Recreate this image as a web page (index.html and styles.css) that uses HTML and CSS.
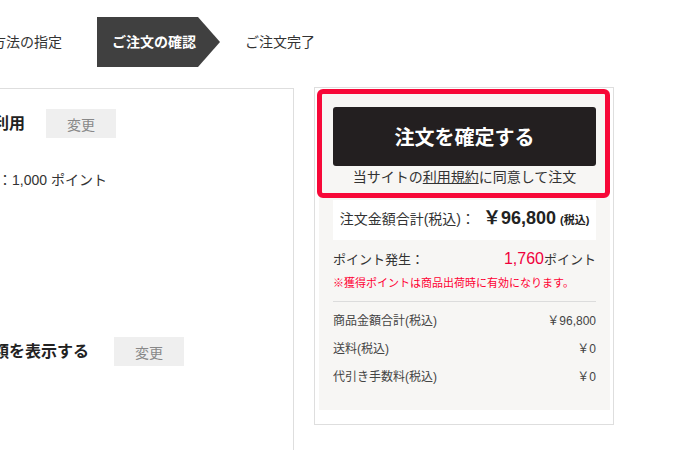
FILE: index.html
```html
<!DOCTYPE html>
<html lang="ja">
<head>
<meta charset="utf-8">
<title>ご注文の確認</title>
<link rel="stylesheet" href="styles.css">
</head>
<body>
<nav class="steps">
  <div class="step step-prev"><span>お支払い方法の指定</span></div>
  <div class="step step-current">ご注文の確認</div>
  <div class="step step-next">ご注文完了</div>
</nav>
<main class="main">
  <section class="options">
    <div class="opt-row">
      <div class="opt-title opt-title-1"><span>ポイントのご利用</span></div>
      <button class="btn-change btn-change-1">変更</button>
    </div>
    <div class="opt-value"><span>ご利用ポイント：1,000 ポイント</span></div>
    <div class="opt-row opt-row-2">
      <div class="opt-title opt-title-2"><span>明細書に金額を表示する</span></div>
      <button class="btn-change btn-change-2">変更</button>
    </div>
  </section>
  <aside class="summary">
    <div class="summary-inner">
      <div class="highlight"></div>
      <button class="confirm-btn">注文を確定する</button>
      <p class="agree">当サイトの<a href="#" class="terms">利用規約</a>に同意して注文</p>
      <div class="total-box">
        <span class="total-label">注文金額合計(税込)：</span>
        <span class="total-price">￥96,800</span>
        <span class="total-tax">(税込)</span>
      </div>
      <div class="points-row">
        <span>ポイント発生：</span>
        <span><span class="points-num">1,760</span>ポイント</span>
      </div>
      <p class="notice">※獲得ポイントは商品出荷時に有効になります。</p>
      <div class="divider"></div>
      <div class="rows">
        <div class="row"><span>商品金額合計(税込)</span><span>￥96,800</span></div>
        <div class="row"><span>送料(税込)</span><span>￥0</span></div>
        <div class="row"><span>代引き手数料(税込)</span><span>￥0</span></div>
      </div>
    </div>
  </aside>
</main>
</body>
</html>
```
FILE: styles.css
```css
html, body {
  margin: 0;
  padding: 0;
  background: #fff;
}
body {
  width: 690px;
  height: 450px;
  overflow: hidden;
  font-family: "Liberation Sans", "Noto Sans CJK JP", sans-serif;
  color: #333;
}

/* step navigation */
.steps {
  display: flex;
  align-items: center;
  height: 50px;
  margin-top: 17px;
  font-size: 14px;
  line-height: 20px;
  color: #333;
}
.step-prev {
  width: 62px;
  overflow: hidden;
  display: flex;
  justify-content: flex-end;
  white-space: nowrap;
}
.step-prev span { flex: none; }
.step-current {
  margin-left: 35px;
  width: 123px;
  height: 50px;
  box-sizing: border-box;
  padding-left: 15px;
  background: #404040;
  color: #fff;
  font-weight: bold;
  display: flex;
  align-items: center;
  clip-path: polygon(0 0, 101px 0, 100% 50%, 101px 100%, 0 100%);
}
.step-next {
  margin-left: 25px;
}

/* main columns */
.main {
  display: flex;
  align-items: flex-start;
  gap: 20px;
  margin-top: 20px;
}

.options {
  width: 294px;
  height: 362px;
  box-sizing: border-box;
  margin-top: 1px;
  border-top: 1px solid #dedede;
  border-right: 1px solid #dedede;
  padding-top: 20px;
}
.opt-row {
  display: flex;
  align-items: center;
  height: 29px;
}
.opt-title {
  overflow: hidden;
  display: flex;
  justify-content: flex-end;
  white-space: nowrap;
  font-size: 16px;
  font-weight: bold;
  color: #222;
  line-height: 22px;
}
.opt-title span { flex: none; }
.opt-title-1 { width: 25px; }
.opt-title-2 { width: 89px; }
.btn-change {
  width: 70px;
  height: 29px;
  border: 0;
  padding: 0;
  background: #efefef;
  color: #888;
  font-family: inherit;
  font-size: 14px;
}
.btn-change-1 { margin-left: 21px; }
.btn-change-2 { margin-left: 25px; }
.opt-value {
  width: 107px;
  margin-top: 32px;
  overflow: hidden;
  display: flex;
  justify-content: flex-end;
  white-space: nowrap;
  font-size: 14px;
  line-height: 20px;
  color: #333;
}
.opt-value span { flex: none; }
.opt-row-2 { margin-top: 147px; }

/* order summary */
.summary {
  width: 300px;
  box-sizing: border-box;
  border: 1px solid #dedede;
  padding: 3px 3px 14px 4px;
}
.summary-inner {
  position: relative;
  background: #f7f6f4;
  padding: 16px 14px 19px;
}
.highlight {
  position: absolute;
  left: -2px;
  top: -2px;
  width: 293px;
  height: 109px;
  box-sizing: border-box;
  border: 5px solid #f70838;
  border-radius: 6px;
  pointer-events: none;
}
.confirm-btn {
  display: flex;
  align-items: center;
  justify-content: center;
  width: 100%;
  height: 59px;
  border: 0;
  padding: 0;
  border-radius: 3px;
  background: #231f20;
  color: #fff;
  font-family: inherit;
  font-size: 20px;
  font-weight: bold;
}
.agree {
  margin: 1px 0 0;
  text-align: center;
  font-size: 14px;
  line-height: 20px;
  color: #333;
}
.terms {
  color: #333;
  text-decoration: underline;
}
.total-box {
  display: flex;
  align-items: baseline;
  justify-content: center;
  height: 40px;
  box-sizing: border-box;
  padding-top: 6px;
  margin-top: 13px;
  background: #fff;
  color: #222;
  line-height: 24px;
}
.total-label {
  font-size: 14px;
  color: #333;
}
.total-price {
  margin-left: 8px;
  font-size: 18px;
  font-weight: bold;
}
.total-tax {
  margin-left: 4px;
  font-size: 11px;
  font-weight: bold;
}
.points-row {
  display: flex;
  justify-content: space-between;
  align-items: baseline;
  margin-top: 9px;
  font-size: 13px;
  line-height: 20px;
  color: #333;
}
.points-num {
  font-size: 16px;
  color: #f0003c;
}
.notice {
  margin: 5px 0 0;
  font-size: 11px;
  line-height: 16px;
  color: #ff0033;
}
.divider {
  margin-top: 10px;
  border-top: 1px solid #dcdcdc;
}
.rows {
  margin-top: 5px;
}
.row {
  display: flex;
  justify-content: space-between;
  font-size: 12px;
  line-height: 28px;
  color: #444;
}
```
